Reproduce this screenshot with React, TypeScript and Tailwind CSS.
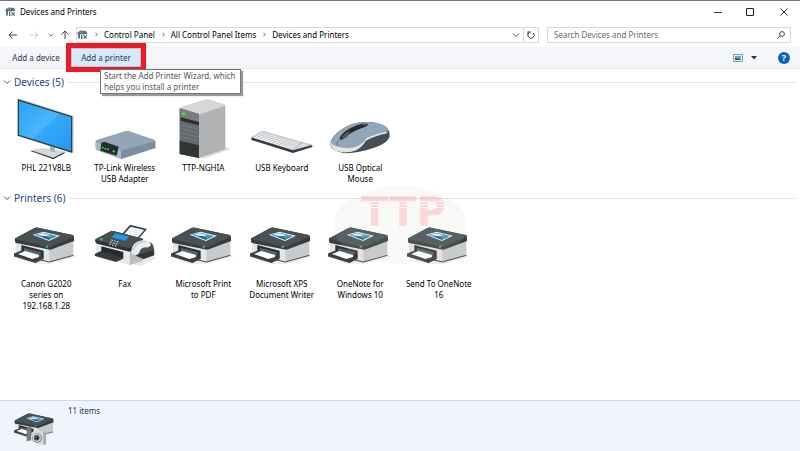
import type { ReactNode } from "react";

type Item = { name: string; lines: string[]; icon: ReactNode };

const iconClass = "h-16 w-16 shrink-0";

function PrinterShape() {
  return (
    <>
      <path d="M60 148 105 160 150 160 232 137 205 128Z" fill="#d9d9d9" opacity=".5" />
      <path d="M48 93 150 116 148 153 106 143 48 124Z" fill="#e4e5e6" />
      <path d="M148 114 220 88V133L148 153Z" fill="#c9cacb" />
      <path d="M64 103 131 120V141L112 136 64 124Z" fill="#2c3336" />
      <path d="M72 112 122 125V138L72 125Z" fill="#5b6367" />
      <path d="M41 129 66 119 131 138V145L108 156 42 136Z" fill="#394044" />
      <path d="M54 130 76 121 117 133 117 139 97 145Z" fill="#fff" />
      <path d="M45 84 102 53Q108 50 114 51L218 73Q223 75 222 84V91L156 116Q150 118 143 116L48 97Q44 95 45 84Z" fill="#363e41" />
      <path d="M45 83 102 53Q108 50 114 51L218 73Q224 75 218 79L156 107Q150 110 143 108L48 86Q44 85 45 83Z" fill="#495155" />
      <path d="M98 72 131 63 180 75 147 91Z" fill="#e9f4fb" />
      <path d="M104 72 131 66 172 76 146 87Z" fill="#3d98e0" />
      <path d="M112 72 128 68 152 74 134 77Z" fill="#dff2ff" />
      <path d="M126 79 150 76 166 79 148 87Z" fill="#4c9b7b" />
      <path d="M122 77 136 77 150 84 146 87Z" fill="#1d5ba5" />
      <path d="M137 106 144 104V111L137 112Z" fill="#27c243" />
      <path d="M42 136 108 156M106 144 148 154 220 134" stroke="#42494d" strokeWidth="3" fill="none" />
    </>
  );
}

function PrinterIcon() {
  return (
    <svg viewBox="42 10 192 192" className={iconClass} aria-hidden="true">
      <PrinterShape />
    </svg>
  );
}

function FaxIcon() {
  return (
    <svg viewBox="278 10 192 192" className={iconClass} aria-hidden="true">
      <path d="M396 160 420 166 468 143 440 130Z" fill="#d9d9d9" opacity=".6" />
      <path d="M389 42 440 55 409 91 358 78Z" fill="#3b4347" />
      <path d="M391 48 432 58 407 86 366 76Z" fill="#f1f3f4" />
      <path d="M287 92 388 118V163L287 132Z" fill="#e8e8e8" />
      <path d="M388 117 428 100V150L388 164Z" fill="#bcbec0" />
      <path d="M303 107 369 124V145L303 128Z" fill="#252b2e" />
      <path d="M283 130 302 121 365 139V146L347 154 284 136Z" fill="#343b3f" />
      <path d="M284 87 331 62Q336 60 342 62L428 84V98L393 121Q388 124 382 122L290 99Q284 97 284 87Z" fill="#2c3336" />
      <path d="M284 86 331 62Q336 60 342 62L428 84 392 110Q387 113 381 112L288 89Z" fill="#465055" />
      <path d="M346 68 387 78 374 90 333 80Z" fill="#1f9cf0" />
      <path d="M333 88 358 95M329 94 354 101M326 100 350 107" stroke="#e8edf0" strokeWidth="3" strokeDasharray="5 4" />
      <circle cx="303" cy="86" r="4" fill="#23d33d" />
      <path d="M410 104 447 94Q464 98 462 133L430 144 400 131Z" fill="#4a5155" />
      <path d="M406 135 458 118 461 134 430 145Z" fill="#2f3539" />
      <path d="M393 120Q397 94 425 89 448 87 452 102 447 112 435 110 421 111 416 127 410 137 396 130Z" fill="#eceded" />
      <path d="M398 121Q403 99 425 94L438 93" stroke="#c6c9cb" strokeWidth="4" fill="none" />
    </svg>
  );
}

function MonitorIcon() {
  return (
    <svg viewBox="42 24 192 192" className={iconClass} aria-hidden="true">
      <defs>
        <linearGradient id="screen" x1="0" y1="0" x2="1" y2="1">
          <stop offset="0" stopColor="#2aa2f7" />
          <stop offset=".5" stopColor="#4bb6fd" />
          <stop offset=".52" stopColor="#34a8f9" />
          <stop offset="1" stopColor="#2299f3" />
        </linearGradient>
      </defs>
      <path d="M91 183 125 176 197 188 160 208Z" fill="#3b4145" />
      <path d="M93 181 125 174 197 184 160 203Z" fill="#d3d9dd" />
      <path d="M150 160H165V187L150 184Z" fill="#aab3b9" />
      <path d="M53 27 58 25 222 77V186L217 189 53 137Z" fill="#d5dade" />
      <path d="M53 27 217 79V189L53 137Z" fill="#343f47" />
      <path d="M57 33 213 82V183L57 134Z" fill="url(#screen)" />
    </svg>
  );
}

function AdapterIcon() {
  return (
    <svg viewBox="278 24 192 192" className={iconClass} aria-hidden="true">
      <path d="M286 155Q284 152 290 150L374 124Q380 122 386 124L460 149Q466 151 465 156V174L369 205Q362 207 356 205L291 181Q286 179 286 173Z" fill="#8496a8" />
      <path d="M286 154 376 124Q380 122 386 124L460 149Q466 152 460 155L369 181Q362 183 355 180Z" fill="#94a6b8" />
      <path d="M362 183 465 153V174L369 205 362 206Z" fill="#7c8ea1" />
      <path d="M286 156 362 182V206L356 205 291 181Q286 179 286 173Z" fill="#a9b9c8" />
      <path d="M303 158 312 155 355 170 349 197 300 182Z" fill="#252b2e" />
      <path d="M372 130 431 149M360 134 418 154M348 138 404 157" stroke="#8497aa" strokeWidth="2" strokeDasharray="4 4" />
      <circle cx="307" cy="173" r="3" fill="#22dc43" />
      <circle cx="315" cy="176" r="3" fill="#22dc43" />
      <circle cx="323" cy="178" r="3" fill="#22dc43" />
      <circle cx="340" cy="184" r="3.5" fill="#22dc43" />
    </svg>
  );
}

function ServerIcon() {
  return (
    <svg viewBox="4 24 192 192" className={iconClass} aria-hidden="true">
      <path d="M90 204 167 170 183 177 106 205Z" fill="#dedede" />
      <path d="M30 57Q31 53 38 51L106 29Q112 27 118 29L162 43Q168 45 167 50V178L88 204 30 192Z" fill="#b1b2b4" />
      <path d="M31 55 106 29Q112 27 118 29L162 43Q169 46 162 49L88 74Z" fill="#d6d7d8" />
      <path d="M30 55 88 72V204L30 192Z" fill="#66696c" />
      <path d="M30 55 88 72V96L30 81Z" fill="#7a7d80" />
      <path d="M33 82 88 96V106L33 92Z" fill="#2b2f31" />
      <path d="M30 152 88 166V204L30 192Z" fill="#2f3437" />
      <path d="M34 104 84 117M34 116 84 129M34 128 84 141M34 140 84 153" stroke="#777b7e" strokeWidth="3" />
      <circle cx="42" cy="71" r="5" fill="#2bea3e" />
    </svg>
  );
}

function KeyboardIcon() {
  return (
    <svg viewBox="239 24 192 192" className={iconClass} aria-hidden="true">
      <path d="M243 143 275 125 426 166V171L368 189 243 150Z" fill="#343c41" />
      <path d="M243 142 272 124Q275 122 280 123L426 165 368 181Z" fill="#c3c9cd" />
      <path
        d="M273 128 411 167M268 132 401 170M262 136 390 173M256 139 379 176M251 142 368 177"
        stroke="#fbfcfc"
        strokeWidth="3"
        strokeDasharray="7 3"
      />
      <path d="M395 156 372 177" stroke="#8f989e" strokeWidth="2" />
    </svg>
  );
}

function MouseIcon() {
  return (
    <svg viewBox="475 24 192 192" className={iconClass} aria-hidden="true">
      <path d="M484 152Q498 123 545 103 591 89 635 103 663 114 660 139 657 157 620 171 562 192 519 189 481 180 482 163Z" fill="#454e55" />
      <path d="M482 160Q482 181 517 187 543 189 560 181 579 170 588 153 608 140 655 129L641 121 492 145Z" fill="#e0e5e8" />
      <path d="M484 154Q497 123 545 103 591 89 635 103 657 111 657 123 625 130 592 143 577 166 554 172 520 177 496 167 482 162 484 154Z" fill="#91a6b9" />
      <path d="M509 145Q519 124 549 111 575 98 593 101 602 105 575 115 545 125 521 147Q513 152 509 145Z" fill="#252d32" />
      <path d="M516 140 532 126 541 125 533 140 519 148Z" fill="#5d5753" />
      <path d="M512 148 502 157 503 169" stroke="#50606d" strokeWidth="2" fill="none" />
      <path d="M579 104 591 103" stroke="#26914b" strokeWidth="4" />
    </svg>
  );
}

function DevicesGlyph() {
  return (
    <svg viewBox="0 0 22 20" className="h-[10px] w-[11px] shrink-0" aria-hidden="true">
      <path d="M1 5 7 1 18 2 21 7 13 9 1 8Z" fill="#5d6a70" />
      <path d="M6 3 13 3 12 6 5 6Z" fill="#3fa6cf" />
      <path d="M2 8H6V17H2Z" fill="#667379" />
      <path d="M8 9H20V18H8Z" fill="#c8d2d6" />
      <path d="M9 10V18M14 11 19 17M19 11 14 17" stroke="#4e5b61" strokeWidth="2" />
    </svg>
  );
}

function StatusIcon() {
  return (
    <svg viewBox="42 66 126 108" className="h-9 w-[42px] shrink-0" aria-hidden="true">
      <g transform="translate(14 37) scale(.66)">
        <PrinterShape />
      </g>
      <path d="M80 112 88 109 94 111V151L80 154Z" fill="#777b7d" />
      <path d="M94 128 101 124 105 119 120 121 124 126 138 123V163L127 165 94 152Z" fill="#d9d9d7" />
      <path d="M130 125 138 123V163L130 165Z" fill="#a9aba9" />
      <circle cx="111" cy="144" r="15" fill="#8c9092" />
      <circle cx="110" cy="143" r="12" fill="#e8eaea" />
      <circle cx="110" cy="143" r="9" fill="#50585c" />
      <circle cx="110" cy="143" r="5" fill="#1c2529" />
      <circle cx="108" cy="141" r="2" fill="#afc7d2" />
    </svg>
  );
}

function Chevron({ className }: { className: string }) {
  return (
    <svg viewBox="0 0 8 8" className={className} fill="none" stroke="currentColor" aria-hidden="true">
      <path d="M1 2.5 4 5.5 7 2.5" />
    </svg>
  );
}

const devices: Item[] = [
  { name: "monitor", lines: ["PHL 221V8LB"], icon: <MonitorIcon /> },
  { name: "adapter", lines: ["TP-Link Wireless", "USB Adapter"], icon: <AdapterIcon /> },
  { name: "computer", lines: ["TTP-NGHIA"], icon: <ServerIcon /> },
  { name: "keyboard", lines: ["USB Keyboard"], icon: <KeyboardIcon /> },
  { name: "mouse", lines: ["USB Optical", "Mouse"], icon: <MouseIcon /> },
];

const printers: Item[] = [
  { name: "canon", lines: ["Canon G2020", "series on", "192.168.1.28"], icon: <PrinterIcon /> },
  { name: "fax", lines: ["Fax"], icon: <FaxIcon /> },
  { name: "pdf", lines: ["Microsoft Print", "to PDF"], icon: <PrinterIcon /> },
  { name: "xps", lines: ["Microsoft XPS", "Document Writer"], icon: <PrinterIcon /> },
  { name: "onenote", lines: ["OneNote for", "Windows 10"], icon: <PrinterIcon /> },
  { name: "onenote16", lines: ["Send To OneNote", "16"], icon: <PrinterIcon /> },
];

function Group({ title, items }: { title: string; items: Item[] }) {
  return (
    <section className="min-h-[116px]">
      <h2 className="flex h-4 items-center pr-1 pl-[3px] text-[10px] leading-4 text-[#26408f]">
        <button className="flex items-center gap-[3px]">
          <Chevron className="h-2 w-2 text-[#555]" />
          {title}
        </button>
        <span className="ml-1 h-px flex-1 bg-[#e4e4e4]" />
      </h2>
      <ul className="mt-2 ml-[7px] grid w-[471px] grid-cols-6">
        {items.map((item) => (
          <li key={item.name} className="flex flex-col items-center">
            {item.icon}
            <span className="text-center leading-[11px] whitespace-nowrap">
              {item.lines.map((line) => (
                <span key={line} className="block">
                  {line}
                </span>
              ))}
            </span>
          </li>
        ))}
      </ul>
    </section>
  );
}

function Watermark() {
  return (
    <div className="pointer-events-none absolute top-[185px] left-[333px] h-[78px] w-[134px] rounded-[50%] bg-[#d0d0c0]/12">
      <div className="absolute top-[12px] left-[28px] font-['DejaVu_Sans',sans-serif] text-[40px] leading-[29px] font-bold text-[#ff3030]/18">
        TTP
      </div>
      <div className="absolute top-[13px] left-[28px] h-[10px] w-[86px] bg-[repeating-linear-gradient(to_bottom,transparent_0_2px,#fcf4f3_2px_3px)]" />
    </div>
  );
}

export default function App() {
  return (
    <div className="relative flex min-h-screen flex-col border-t border-[#777] bg-white font-['Noto_Sans','Open_Sans',sans-serif] text-[8px] leading-[11px] text-black">
      <header className="flex h-[21px] items-center gap-1 pl-[5px]">
        <DevicesGlyph />
        <h1 className="flex-1">Devices and Printers</h1>
        <button aria-label="Minimize" className="flex h-5 w-7 items-center justify-center">
          <svg viewBox="0 0 8 8" className="h-2 w-2" stroke="#333"><path d="M0 4.5H8" /></svg>
        </button>
        <button aria-label="Maximize" className="flex h-5 w-7 items-center justify-center">
          <svg viewBox="0 0 8 8" className="h-2 w-2" stroke="#222" fill="none"><path d="M.5.5H7.500V7.500H.5Z" /></svg>
        </button>
        <button aria-label="Close" className="flex h-5 w-8 items-center justify-center">
          <svg viewBox="0 0 8 8" className="h-2 w-2" stroke="#222"><path d="M.5.5 7.500 7.500M7.500.5.5 7.500" /></svg>
        </button>
      </header>

      <nav className="flex h-[25px] items-center pr-[9px] pl-2" aria-label="Location">
        <button aria-label="Back" className="w-[21px]">
          <svg viewBox="0 0 10 8" className="h-2 w-[10px]" stroke="#444" fill="none"><path d="M9 4H1M4.500.5 1 4 4.500 7.500" /></svg>
        </button>
        <button aria-label="Forward" className="w-[18px]">
          <svg viewBox="0 0 10 8" className="h-2 w-[10px]" stroke="#d0d0d0" fill="none"><path d="M1 4H9M5.500.5 9 4 5.500 7.500" /></svg>
        </button>
        <button aria-label="Recent locations" className="w-[14px]">
          <Chevron className="ml-px h-[6px] w-[6px] text-[#444]" />
        </button>
        <button aria-label="Up" className="w-[15px]">
          <svg viewBox="0 0 8 9" className="h-[9px] w-2" stroke="#444" fill="none"><path d="M4 9V1M.5 4.500 4 1 7.500 4.500" /></svg>
        </button>
        <div className="flex h-4 flex-1 items-center border border-[#d9d9d9]">
          <DevicesGlyph />
          <ol className="flex flex-1 items-center">
            {["Control Panel", "All Control Panel Items", "Devices and Printers"].map((crumb) => (
              <li key={crumb} className="flex items-center">
                <svg viewBox="0 0 4 6" className="mr-[6px] ml-[7px] h-[5px] w-[3px]" stroke="#333" fill="none" aria-hidden="true"><path d="M.5.5 3 3 .5 5.500" /></svg>
                <a href="#">{crumb}</a>
              </li>
            ))}
          </ol>
          <button aria-label="Previous locations" className="flex h-full w-[14px] items-center justify-center">
            <Chevron className="h-2 w-2 text-[#444]" />
          </button>
          <button aria-label="Refresh" className="flex h-full w-[15px] items-center justify-center border-l border-[#d9d9d9]">
            <svg viewBox="0 0 8 8" className="h-2 w-2" stroke="#444" fill="none"><path d="M2 1.500A3.200 3.200 0 1 0 6.500 2M1 .5V3.500M1 1H4" /></svg>
          </button>
        </div>
        <label className="ml-2 flex h-4 w-[244px] items-center border border-[#d9d9d9] pr-[5px] pl-[6px]">
          <input type="search" aria-label="Search Devices and Printers" placeholder="Search Devices and Printers" className="min-w-0 flex-1 outline-none placeholder:text-[#6d6d6d]" />
          <svg viewBox="0 0 8 8" className="h-2 w-2" stroke="#444" fill="none" aria-hidden="true"><circle cx="5" cy="3" r="2.400" /><path d="M3.300 4.700.5 7.500" /></svg>
        </label>
      </nav>

      <div className="flex h-[22px] items-center border-b border-[#e3e7ee] bg-[#f4f6f9] pr-[10px] text-[#1e395b]">
        <button className="h-[18px] w-[71px] pl-px">Add a device</button>
        <div className="relative">
          <button className="block h-[19px] w-[70px] border border-[#a6cbe6] bg-[#d9e8f5]" aria-describedby="printer-tip">Add a printer</button>
          <div className="pointer-events-none absolute -inset-[5px] border-[5px] border-[#ed1c24]" />
          <p id="printer-tip" role="tooltip" className="absolute top-[21px] left-[29px] z-10 w-[141px] border border-[#767676] bg-white px-[3px] pb-px whitespace-nowrap text-[#575757] shadow-[2px_2px_1px_#999]">
            Start the Add Printer Wizard, which
            <br />
            helps you install a printer
          </p>
        </div>
        <span className="flex-1" />
        <button aria-label="Change view" className="mr-2">
          <svg viewBox="0 0 20 16" className="h-2 w-[10px]" aria-hidden="true"><path d="M1 1H19V15H1Z" fill="#eef5fb" stroke="#8b9aa7" strokeWidth="2" /><path d="M4 4H16V12H4Z" fill="#5aaee2" /><path d="M4 8 10 9 16 12H4Z" fill="#23543e" /></svg>
        </button>
        <button aria-label="More view options" className="mr-[21px]">
          <svg viewBox="0 0 6 4" className="h-1 w-[6px]" fill="#1e395b"><path d="M0 0H6L3 3.500Z" /></svg>
        </button>
        <button aria-label="Help" className="flex h-3 w-3 items-center justify-center rounded-full bg-[#0a64bd] text-[9px] font-bold text-white">?</button>
      </div>

      <main className="flex-1 pt-[5px]">
        <Group title="Devices (5)" items={devices} />
        <Group title="Printers (6)" items={printers} />
      </main>
      <Watermark />

      <footer className="flex h-[51px] items-start border-t border-[#c9d8ea] bg-[#f0f4fb] pl-[14px] text-[#1e395b]">
        <span className="mt-[11px]"><StatusIcon /></span>
        <p className="mt-1 ml-3">11 items</p>
      </footer>
    </div>
  );
}
